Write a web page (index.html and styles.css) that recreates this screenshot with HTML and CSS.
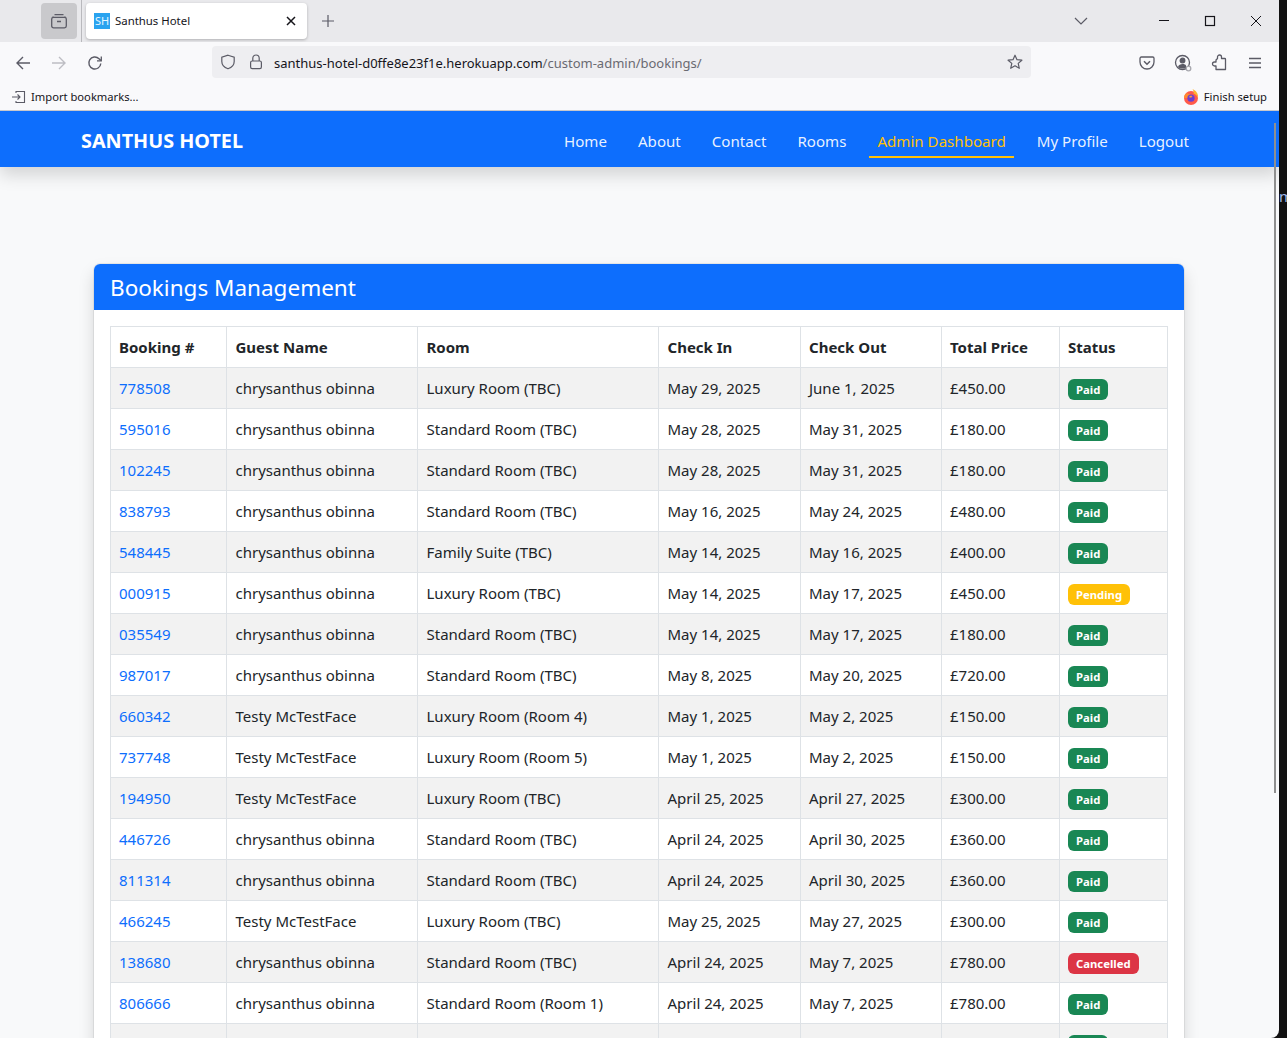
FILE: index.html
```html
<!DOCTYPE html>
<html lang="en">
<head>
    <meta charset="UTF-8">
    <meta name="viewport" content="width=device-width, initial-scale=1.0">
    <title>Santhus Hotel</title>
    <link rel="stylesheet" href="styles.css">
</head>
<body>
    <div class="window">
        <div class="tabbar">
            <div class="view-btn">
                <svg width="18" height="18" viewBox="0 0 18 18" fill="none" stroke="#5b5b66" stroke-width="1.3"><path d="M4.500 2.600h9M3 5.300V4.500M15 5.300V4.500"/><rect x="1.700" y="5.300" width="14.600" height="10.500" rx="1.800"/><path d="M7 9.500h4" stroke-width="1.500"/></svg>
            </div>
            <div class="tab-sep"></div>
            <div class="tab">
                <span class="favicon">SH</span>
                <span class="tab-title">Santhus Hotel</span>
                <svg class="tab-close" width="10" height="10" viewBox="0 0 10 10" stroke="#15141a" stroke-width="1.5"><path d="M1 1l8 8M9 1l-8 8"/></svg>
            </div>
            <svg class="new-tab" width="14" height="14" viewBox="0 0 14 14" stroke="#5b5b66" stroke-width="1.2"><path d="M7 1v12M1 7h12"/></svg>
            <svg class="tab-list" width="14" height="8" viewBox="0 0 14 8" fill="none" stroke="#5b5b66" stroke-width="1.2"><path d="M1 1l6 6 6-6"/></svg>
            <div class="win-btn"><svg width="12" height="12" viewBox="0 0 12 12" stroke="#15141a" stroke-width="1"><path d="M1 5.500h10"/></svg></div>
            <div class="win-btn"><svg width="12" height="12" viewBox="0 0 12 12" fill="none" stroke="#15141a" stroke-width="1.2"><rect x="1.500" y="1.500" width="9" height="9"/></svg></div>
            <div class="win-btn"><svg width="12" height="12" viewBox="0 0 12 12" stroke="#15141a" stroke-width="1"><path d="M1 1l10 10M11 1L1 11"/></svg></div>
        </div>

        <div class="toolbar">
            <div class="tool-btn"><svg width="16" height="16" viewBox="0 0 16 16" fill="none" stroke="#5b5b66" stroke-width="1.4"><path d="M15 8H2M8 2L2 8l6 6"/></svg></div>
            <div class="tool-btn"><svg width="16" height="16" viewBox="0 0 16 16" fill="none" stroke="#bdbdc3" stroke-width="1.4"><path d="M1 8h13M8 2l6 6-6 6"/></svg></div>
            <div class="tool-btn"><svg width="16" height="16" viewBox="0 0 16 16" fill="none" stroke="#5b5b66" stroke-width="1.4"><path d="M13.800 8.500A6 6 0 1 1 12 3.700L14 5.600"/><path d="M14.300 1.500v4.400H10" stroke-width="1.300"/></svg></div>
            <div class="urlbar">
                <svg class="url-shield" width="16" height="16" viewBox="0 0 16 16" fill="none" stroke="#5b5b66" stroke-width="1.2"><path d="M8 1.200l6.200 2v4.200c0 3.600-2.600 6-6.200 7.400-3.600-1.400-6.200-3.800-6.200-7.400V3.200z"/></svg>
                <svg class="url-lock" width="14" height="16" viewBox="0 0 14 16" fill="none" stroke="#5b5b66" stroke-width="1.2"><rect x="1.600" y="7" width="10.800" height="7.600" rx="1.600"/><path d="M3.800 7V4.200a3.200 3.200 0 0 1 6.400 0V7"/></svg>
                <span class="url-text">santhus-hotel-d0ffe8e23f1e.herokuapp.com<span class="url-path">/custom-admin/bookings/</span></span>
                <svg class="url-star" width="16" height="16" viewBox="0 0 16 16" fill="none" stroke="#5b5b66" stroke-width="1.2" stroke-linejoin="round"><path d="M8 1.200l2 4.500 4.900.5-3.700 3.200 1.100 4.900L8 11.800l-4.300 2.500 1.100-4.900L1.100 6.200l4.900-.5z"/></svg>
            </div>
            <div class="tool-btn push"><svg width="16" height="16" viewBox="0 0 16 16" fill="none" stroke="#5b5b66" stroke-width="1.300"><path d="M2.300 2h11.400c.7 0 1.300.6 1.300 1.300V7a7 7 0 0 1-14 0V3.300C1 2.600 1.600 2 2.300 2z"/><path d="M5 6.300l3 3 3-3" stroke-width="1.500"/></svg></div>
            <div class="tool-btn"><svg width="18" height="18" viewBox="0 0 18 18" fill="none" stroke="#5b5b66" stroke-width="1.300"><circle cx="8.500" cy="8.500" r="7"/><circle cx="8.500" cy="6.500" r="2.300" fill="#5b5b66"/><path d="M4 13c.6-2.200 2.500-3 4.500-3s3 .5 3.500 1.500v3H6z" fill="#5b5b66" stroke="none"/><circle cx="14.500" cy="14.500" r="2.300" fill="#f9f9fb" stroke="#a8a8ae"/></svg></div>
            <div class="tool-btn"><svg width="16" height="17" viewBox="0 0 16 17" fill="none" stroke="#5b5b66" stroke-width="1.300" stroke-linejoin="round"><path d="M6.500 4.500V3a2 2 0 0 1 4 0v1.500h3.300c.4 0 .7.300.7.700V15.500H5V12H3.500a2 2 0 0 1 0-4H5V6z"/></svg></div>
            <div class="tool-btn"><svg width="14" height="12" viewBox="0 0 14 12" stroke="#5b5b66" stroke-width="1.300"><path d="M1 1.500h12M1 6h12M1 10.500h12"/></svg></div>
        </div>

        <div class="bookmarks">
            <svg width="14" height="14" viewBox="0 0 14 14" fill="none" stroke="#5b5b66" stroke-width="1.100"><path d="M4 3V1.500h8.500v11H4V11"/><path d="M0 7h8M5.500 4.500L8 7 5.500 9.500"/></svg>
            <span class="bm-label">Import bookmarks...</span>
            <svg class="bm-setup" width="16" height="16" viewBox="0 0 16 16"><circle cx="8" cy="9" r="7" fill="#ff5a4a"/><path d="M9.500 0c3.500 1.500 6 4.500 5.500 9-.8-2.500-3-4-4.500-4.500C11 3 10.500 1.500 9.500 0z" fill="#ffb52e"/><path d="M1 9C1 6.500 2.500 4.500 4 4c1 1 2 1 4 1-1.500 1-2.500 2-2.500 4z" fill="#ff8a2e"/><circle cx="8" cy="9.200" r="3.600" fill="#6a3fd1"/><path d="M6 8c.8-1.300 2.500-1.500 3.500-.8-.7.200-1 .8-1 1.300-1 .2-1.700 0-2.500-.5z" fill="#ffa02e"/></svg>
            <span class="bm-label">Finish setup</span>
        </div>

        <div class="page">
            <nav class="navbar">
                <a class="brand" href="#">SANTHUS HOTEL</a>
                <ul class="nav-links">
                    <li><a href="#">Home</a></li>
                    <li><a href="#">About</a></li>
                    <li><a href="#">Contact</a></li>
                    <li><a href="#">Rooms</a></li>
                    <li><a class="active" href="#">Admin Dashboard</a></li>
                    <li><a href="#">My Profile</a></li>
                    <li><a href="#">Logout</a></li>
                </ul>
            </nav>

            <div class="card">
                <div class="card-header">Bookings Management</div>
                <div class="card-body">
                    <table class="bookings">
                        <colgroup>
                            <col class="c1"><col class="c2"><col class="c3"><col class="c4"><col class="c5"><col class="c6"><col class="c7">
                        </colgroup>
                        <thead>
                            <tr><th>Booking #</th><th>Guest Name</th><th>Room</th><th>Check In</th><th>Check Out</th><th>Total Price</th><th>Status</th></tr>
                        </thead>
                        <tbody>
                            <tr><td><a href="#">778508</a></td><td>chrysanthus obinna</td><td>Luxury Room (TBC)</td><td>May 29, 2025</td><td>June 1, 2025</td><td>£450.00</td><td><span class="badge paid">Paid</span></td></tr>
                            <tr><td><a href="#">595016</a></td><td>chrysanthus obinna</td><td>Standard Room (TBC)</td><td>May 28, 2025</td><td>May 31, 2025</td><td>£180.00</td><td><span class="badge paid">Paid</span></td></tr>
                            <tr><td><a href="#">102245</a></td><td>chrysanthus obinna</td><td>Standard Room (TBC)</td><td>May 28, 2025</td><td>May 31, 2025</td><td>£180.00</td><td><span class="badge paid">Paid</span></td></tr>
                            <tr><td><a href="#">838793</a></td><td>chrysanthus obinna</td><td>Standard Room (TBC)</td><td>May 16, 2025</td><td>May 24, 2025</td><td>£480.00</td><td><span class="badge paid">Paid</span></td></tr>
                            <tr><td><a href="#">548445</a></td><td>chrysanthus obinna</td><td>Family Suite (TBC)</td><td>May 14, 2025</td><td>May 16, 2025</td><td>£400.00</td><td><span class="badge paid">Paid</span></td></tr>
                            <tr><td><a href="#">000915</a></td><td>chrysanthus obinna</td><td>Luxury Room (TBC)</td><td>May 14, 2025</td><td>May 17, 2025</td><td>£450.00</td><td><span class="badge pending">Pending</span></td></tr>
                            <tr><td><a href="#">035549</a></td><td>chrysanthus obinna</td><td>Standard Room (TBC)</td><td>May 14, 2025</td><td>May 17, 2025</td><td>£180.00</td><td><span class="badge paid">Paid</span></td></tr>
                            <tr><td><a href="#">987017</a></td><td>chrysanthus obinna</td><td>Standard Room (TBC)</td><td>May 8, 2025</td><td>May 20, 2025</td><td>£720.00</td><td><span class="badge paid">Paid</span></td></tr>
                            <tr><td><a href="#">660342</a></td><td>Testy McTestFace</td><td>Luxury Room (Room 4)</td><td>May 1, 2025</td><td>May 2, 2025</td><td>£150.00</td><td><span class="badge paid">Paid</span></td></tr>
                            <tr><td><a href="#">737748</a></td><td>Testy McTestFace</td><td>Luxury Room (Room 5)</td><td>May 1, 2025</td><td>May 2, 2025</td><td>£150.00</td><td><span class="badge paid">Paid</span></td></tr>
                            <tr><td><a href="#">194950</a></td><td>Testy McTestFace</td><td>Luxury Room (TBC)</td><td>April 25, 2025</td><td>April 27, 2025</td><td>£300.00</td><td><span class="badge paid">Paid</span></td></tr>
                            <tr><td><a href="#">446726</a></td><td>chrysanthus obinna</td><td>Standard Room (TBC)</td><td>April 24, 2025</td><td>April 30, 2025</td><td>£360.00</td><td><span class="badge paid">Paid</span></td></tr>
                            <tr><td><a href="#">811314</a></td><td>chrysanthus obinna</td><td>Standard Room (TBC)</td><td>April 24, 2025</td><td>April 30, 2025</td><td>£360.00</td><td><span class="badge paid">Paid</span></td></tr>
                            <tr><td><a href="#">466245</a></td><td>Testy McTestFace</td><td>Luxury Room (TBC)</td><td>May 25, 2025</td><td>May 27, 2025</td><td>£300.00</td><td><span class="badge paid">Paid</span></td></tr>
                            <tr><td><a href="#">138680</a></td><td>chrysanthus obinna</td><td>Standard Room (TBC)</td><td>April 24, 2025</td><td>May 7, 2025</td><td>£780.00</td><td><span class="badge cancelled">Cancelled</span></td></tr>
                            <tr><td><a href="#">806666</a></td><td>chrysanthus obinna</td><td>Standard Room (Room 1)</td><td>April 24, 2025</td><td>May 7, 2025</td><td>£780.00</td><td><span class="badge paid">Paid</span></td></tr>
                            <tr><td></td><td></td><td></td><td></td><td></td><td></td><td><span class="badge paid">Paid</span></td></tr>
                        </tbody>
                    </table>
                </div>
            </div>
            <div class="scrollbar"></div>
        </div>
    </div>
    <div class="desktop"><span class="desktop-text">m</span></div>
</body>
</html>
```

FILE: styles.css
```css
* { box-sizing: border-box; }
html, body { height: 100%; }
body { margin: 0; display: flex; height: 100vh; overflow: hidden; background: #111; font-family: "Noto Sans", sans-serif; font-size: 15px; line-height: 24px; color: #212529; }
a { text-decoration: none; }

.window { width: 1279px; height: 100%; display: flex; flex-direction: column; overflow: hidden; background: #f8f9fa; border-bottom-right-radius: 8px; }
.desktop { flex: 1; position: relative; background: #111; }
.desktop-text { position: absolute; left: 0; top: 184px; width: 8px; overflow: hidden; color: #9db4e8; font-size: 15px; }

/* browser chrome */
.tabbar { height: 42px; flex: none; display: flex; align-items: center; padding-left: 41px; background: #e9e9ec; }
.view-btn { width: 36px; height: 36px; display: flex; align-items: center; justify-content: center; background: #c9c9cc; border-radius: 4px; }
.tab-sep { width: 1px; height: 42px; margin: 0 4px 0 4px; background: #b9b9bd; }
.tab { width: 221px; height: 36px; display: flex; align-items: center; padding: 0 11px 0 8px; background: #fff; border-radius: 4px; box-shadow: 0 1px 3px rgba(0, 0, 0, 0.25); }
.favicon { width: 16px; height: 16px; background: #2aa3ef; color: #e8f6ff; font-size: 11px; line-height: 16px; text-align: center; }
.tab-title { margin-left: 5px; font-size: 11.4px; color: #15141a; }
.tab-close { margin-left: auto; }
.new-tab { margin-left: 14px; }
.tab-list { margin: 0 53px 0 739px; }
.win-btn { width: 46px; height: 42px; display: flex; align-items: center; justify-content: center; }

.toolbar { height: 41px; flex: none; display: flex; align-items: center; padding: 0 6px 0 5px; background: #f9f9fb; }
.tool-btn { width: 36px; height: 36px; display: flex; align-items: center; justify-content: center; }
.tool-btn.push { margin-left: auto; }
.urlbar { width: 819px; height: 32px; margin: -1px 0 0 99px; display: flex; align-items: center; padding: 0 8px; background: #eeeef1; border-radius: 4px; }
.url-lock { margin-left: 13px; }
.url-text { margin-left: 11px; padding-top: 2px; font-size: 13px; color: #15141a; white-space: nowrap; }
.url-path { color: #6a6a72; }
.url-star { margin-left: auto; }

.bookmarks { height: 28px; flex: none; display: flex; align-items: center; padding: 0 12px; background: #f9f9fb; border-bottom: 1px solid #c8c8cc; }
.bm-label { margin-left: 5px; font-size: 11.2px; color: #15141a; }
.bm-setup { margin-left: auto; }

/* page */
.page { position: relative; flex: 1; overflow: hidden; }
.navbar { height: 56px; display: flex; align-items: center; padding: 0 82px 0 81px; background: #0d6efd; box-shadow: 0 8px 16px rgba(0, 0, 0, 0.15); }
.brand { margin-top: 4px; font-size: 19.8px; font-weight: 700; color: #fff; }
.nav-links { display: flex; gap: 15px; margin: 0 0 0 auto; padding: 0; list-style: none; }
.nav-links a { display: block; padding: 9px 8px 3px; font-size: 15.1px; color: rgba(255, 255, 255, 0.92); border-bottom: 2px solid transparent; }
.nav-links a.active { color: #ffc107; border-bottom-color: #ffc107; }

.card { width: 1090px; margin: 97px 0 0 94px; background: #fff; border-radius: 6px; box-shadow: 0 0 0 1px rgba(0, 0, 0, 0.06), 0 8px 16px rgba(0, 0, 0, 0.15); }
.card-header { height: 46px; padding: 0 16px; background: #0d6efd; border-radius: 6px 6px 0 0; color: #fff; font-size: 22.5px; line-height: 47px; }
.card-body { padding: 16px; }

.bookings { width: 1057px; table-layout: fixed; border-collapse: collapse; }
.bookings th, .bookings td { height: 41px; padding: 8px; border: 1px solid #dee2e6; text-align: left; vertical-align: top; white-space: nowrap; }
.bookings th:nth-child(2), .bookings td:nth-child(2), .bookings th:nth-child(3), .bookings td:nth-child(3), .bookings th:nth-child(4), .bookings td:nth-child(4) { padding-left: 8.5px; }
.bookings th { font-weight: 700; }
.bookings tbody tr:nth-child(odd) td { background: #f2f2f2; }
.bookings a { color: #0d6efd; }
.c1 { width: 116px; }
.c2 { width: 191px; }
.c3 { width: 241px; }
.c4 { width: 142px; }
.c5 { width: 141px; }
.c6 { width: 118px; }
.c7 { width: 108px; }

.badge { display: block; width: max-content; margin-top: 3px; padding: 4px 8px; border-radius: 6px; color: #fff; font-size: 11.3px; font-weight: 700; line-height: 13px; }
.paid { background: #198754; }
.pending { background: #ffc107; }
.cancelled { background: #dc3545; }

.scrollbar { position: absolute; right: 3px; top: 12px; width: 2px; height: 670px; background: #8f8f8f; }
```
